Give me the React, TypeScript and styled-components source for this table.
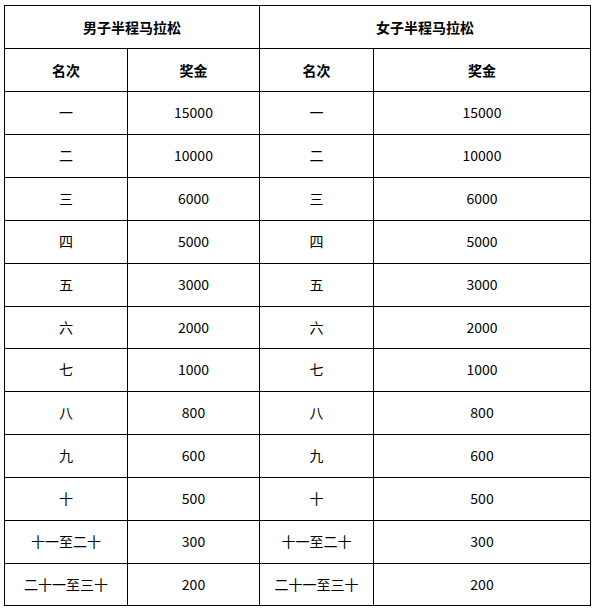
import React from "react";
import styled, { createGlobalStyle } from "styled-components";

const Global = createGlobalStyle`
  html, body { margin: 0; padding: 0; background: #fff; }
  body { font-family: "Noto Sans CJK SC", "Noto Sans", sans-serif; color: #000; }
`;

const Page = styled.div`
  padding: 5px 0 0 4px;
`;

const Table = styled.table`
  border-collapse: collapse;
  table-layout: fixed;
  width: 586px;
`;

const Row = styled.tr<{ $h: number }>`
  height: ${(p) => p.$h}px;
`;

const Cell = styled.td<{ $bold?: boolean }>`
  border: 1px solid #000;
  padding: 0 0 ${(p) => (p.$bold ? 0 : 2)}px 0;
  text-align: center;
  vertical-align: middle;
  font-size: 14px;
  line-height: 18px;
  font-weight: ${(p) => (p.$bold ? 700 : 400)};
`;

const ranks = ["一", "二", "三", "四", "五", "六", "七", "八", "九", "十", "十一至二十", "二十一至三十"];
const prizes = ["15000", "10000", "6000", "5000", "3000", "2000", "1000", "800", "600", "500", "300", "200"];
const heights = [43, 43, 43, 43, 43, 42, 43, 43, 43, 43, 43, 42];

export default function App() {
  return (
    <Page>
      <Global />
      <Table>
        <colgroup>
          <col style={{ width: 123 }} />
          <col style={{ width: 132 }} />
          <col style={{ width: 114 }} />
          <col style={{ width: 217 }} />
        </colgroup>
        <tbody>
          <Row $h={43}>
            <Cell $bold colSpan={2}>男子半程马拉松</Cell>
            <Cell $bold colSpan={2}>女子半程马拉松</Cell>
          </Row>
          <Row $h={43}>
            <Cell $bold>名次</Cell>
            <Cell $bold>奖金</Cell>
            <Cell $bold>名次</Cell>
            <Cell $bold>奖金</Cell>
          </Row>
          {ranks.map((r, i) => (
            <Row key={r} $h={heights[i]}>
              <Cell>{r}</Cell>
              <Cell>{prizes[i]}</Cell>
              <Cell>{r}</Cell>
              <Cell>{prizes[i]}</Cell>
            </Row>
          ))}
        </tbody>
      </Table>
    </Page>
  );
}
